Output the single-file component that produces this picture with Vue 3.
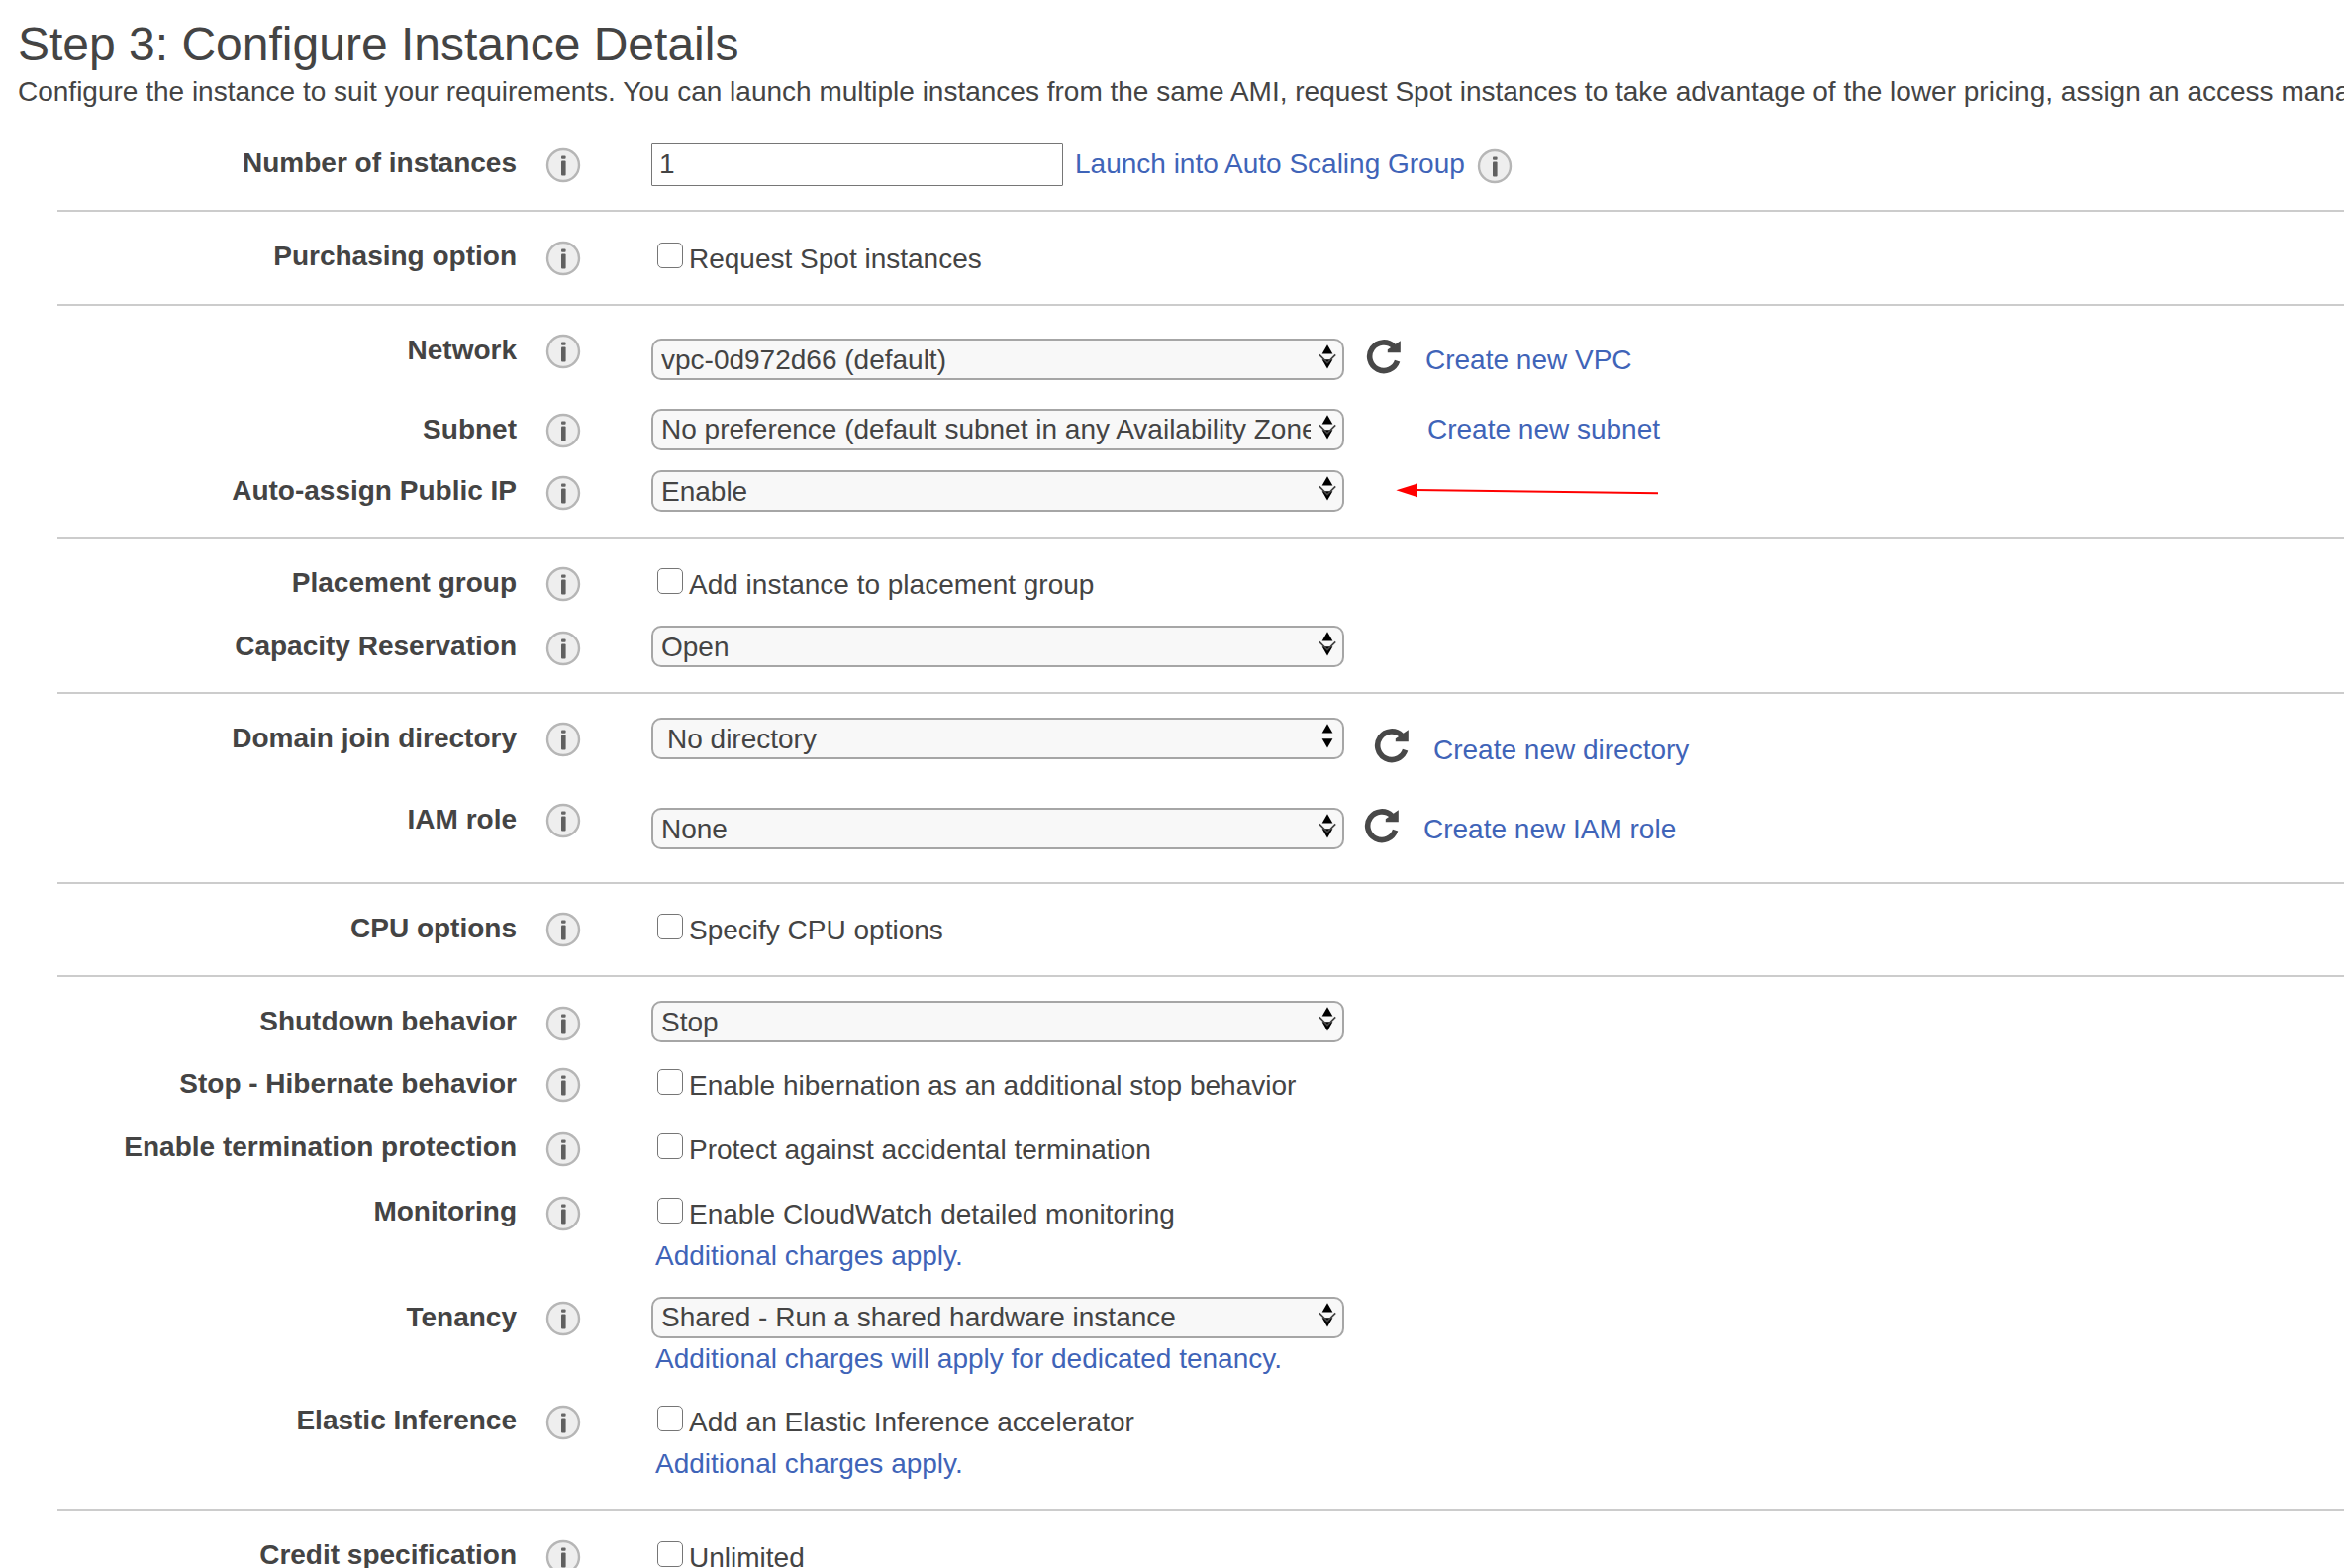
<script setup>
const sections = [
  {
    rows: [
      { label: 'Number of instances', height: 69, type: 'input', value: '1', link: 'Launch into Auto Scaling Group', kind: 'launch', top: 1 },
    ],
  },
  { pad: 23, rows: [{ label: 'Purchasing option', height: 70, type: 'check', value: 'Request Spot instances', top: 8 }] },
  {
    pad: 22,
    rows: [
      { label: 'Network', height: 80, type: 'select', value: 'vpc-0d972d66 (default)', required: true, refresh: true, link: 'Create new VPC', kind: 'vpc', top: 11, low: true },
      { label: 'Subnet', height: 63, type: 'select', value: 'No preference (default subnet in any Availability Zone)', required: true, raised: true, link: 'Create new subnet', kind: 'subnet', top: 2, low: true },
      { label: 'Auto-assign Public IP', height: 68, type: 'select', value: 'Enable', required: true, arrow: true, top: 1 },
    ],
  },
  {
    pad: 22,
    rows: [
      { label: 'Placement group', height: 65, type: 'check', value: 'Add instance to placement group', top: 8, low: true },
      { label: 'Capacity Reservation', height: 68, type: 'select', value: 'Open', required: true, top: 1 },
    ],
  },
  {
    pad: 22,
    rows: [
      { label: 'Domain join directory', height: 82, type: 'select', value: 'No directory', refresh: true, link: 'Create new directory', kind: 'directory', top: 2, low: true },
      { label: 'IAM role', height: 86, type: 'select', value: 'None', required: true, refresh: true, link: 'Create new IAM role', kind: 'iam', top: 11, low: true },
    ],
  },
  { pad: 22, rows: [{ label: 'CPU options', height: 70, type: 'check', value: 'Specify CPU options', top: 8, low: true }] },
  {
    pad: 23,
    rows: [
      { label: 'Shutdown behavior', height: 62, type: 'select', value: 'Stop', required: true, top: 1 },
      { label: 'Stop - Hibernate behavior', height: 65, type: 'check', value: 'Enable hibernation as an additional stop behavior', top: 8, low: true },
      { label: 'Enable termination protection', height: 65, type: 'check', value: 'Protect against accidental termination', top: 8 },
      { label: 'Monitoring', height: 106, type: 'check', value: 'Enable CloudWatch detailed monitoring', note: 'Additional charges apply.', top: 8 },
      { label: 'Tenancy', height: 105, type: 'select', value: 'Shared - Run a shared hardware instance', required: true, raised: true, note: 'Additional charges will apply for dedicated tenancy.', top: 2, low: true },
      { label: 'Elastic Inference', height: 111, type: 'check', value: 'Add an Elastic Inference accelerator', note: 'Additional charges apply.', top: 7 },
    ],
  },
  { pad: 23, rows: [{ label: 'Credit specification', height: 69, type: 'check', value: 'Unlimited', top: 8 }] },
]
</script>

<template>
  <main class="page">
    <svg class="defs" width="0" height="0" aria-hidden="true">
      <symbol id="info" viewBox="0 0 36 36">
        <circle cx="18" cy="18" r="16" fill="#eeeeee" stroke="#b6b6b6" stroke-width="2.4" />
        <rect x="16" y="8.6" width="4.6" height="3.2" rx="1" fill="#666" />
        <rect x="16" y="13.6" width="4.6" height="15" rx="1" fill="#606060" />
      </symbol>
      <symbol id="refresh" viewBox="0 0 36 36">
        <path d="M31.6 22.6A14.3 14.3 0 1 1 28 8" fill="none" stroke="#484848" stroke-width="5.6" />
        <path d="M34.8 2.2V14.2H21.8V11.2Z" fill="#484848" />
      </symbol>
    </svg>

    <header>
      <h1>Step 3: Configure Instance Details</h1>
      <p class="intro">Configure the instance to suit your requirements. You can launch multiple instances from the same AMI, request Spot instances to take advantage of the lower pricing, assign an access management role to the instance, and more.</p>
    </header>

    <form>
      <section v-for="(s, i) in sections" :key="i" :style="{ paddingTop: (s.pad || 0) + 'px' }">
        <div v-for="r in s.rows" :key="r.label" class="row" :style="{ height: r.height + 'px' }">
          <div class="label" :class="{ low: r.low }">{{ r.label }}</div>
          <svg class="info"><use href="#info" /></svg>
          <div class="control" :style="{ marginTop: r.top + 'px' }">
            <div class="line">
              <div v-if="r.type === 'input'" class="field">{{ r.value }}</div>
              <label v-else-if="r.type === 'check'" class="check">
                <input type="checkbox" /><span>{{ r.value }}</span>
              </label>
              <div v-else class="select" :class="{ plain: !r.required, raised: r.raised }">
                <span class="value">{{ r.value }}</span>
                <svg class="arrows" viewBox="0 0 20 28">
                  <path d="M10 1.2L15.4 10.4H4.6Z" fill="#000" />
                  <path d="M4.6 16.2H15.4L10 25.6Z" fill="#000" />
                  <path v-if="r.required" d="M1.8 11.4L10 19.6L18.2 11.4" fill="none" stroke="#444" stroke-width="1.7" />
                </svg>
              </div>
              <div v-if="r.link" class="aside" :class="r.kind">
                <svg v-if="r.refresh" class="refresh"><use href="#refresh" /></svg>
                <a>{{ r.link }}</a>
                <svg v-if="r.kind === 'launch'" class="info side"><use href="#info" /></svg>
              </div>
              <svg v-if="r.arrow" class="pointer" viewBox="0 0 266 16">
                <path d="M20 7.1L265 10.2" stroke="#f00" stroke-width="2" />
                <path d="M0.4 7.2L22 0.6V14.2Z" fill="#f00" />
              </svg>
            </div>
            <a v-if="r.note" class="note" :class="{ spaced: r.type === 'check' }">{{ r.note }}</a>
          </div>
        </div>
      </section>
    </form>
  </main>
</template>

<style>
body {
  margin: 0;
  background: #fff;
}
</style>

<style scoped>
.page {
  width: 2368px;
  height: 1584px;
  overflow: hidden;
  font: 28px/32px "Liberation Sans", Arial, sans-serif;
  color: #444;
  background: #fff;
}
.defs {
  position: absolute;
}
header {
  height: 143px;
  padding-left: 18px;
  box-sizing: border-box;
}
h1 {
  margin: 0;
  padding-top: 17px;
  font-size: 48px;
  line-height: 56px;
  font-weight: 400;
}
.intro {
  margin: 4px 0 0;
  white-space: nowrap;
}
section {
  margin-left: 58px;
}
section + section {
  border-top: 2px solid #ccc;
}
.row {
  display: flex;
  align-items: flex-start;
}
.label {
  width: 464px;
  margin-top: 6px;
  text-align: right;
  font-weight: 700;
  white-space: nowrap;
}
.label.low {
  margin-top: 7px;
}
.info {
  flex: none;
  width: 36px;
  height: 36px;
  margin: 6px 0 0 29px;
}
.control {
  margin-left: 71px;
  white-space: nowrap;
}
.line {
  display: flex;
  align-items: flex-start;
}
.field {
  width: 416px;
  height: 44px;
  box-sizing: border-box;
  padding: 5px 7px;
  border: 1px solid #767676;
  border-radius: 1px;
}
.check {
  display: flex;
  margin-left: 6px;
}
.check input {
  appearance: none;
  width: 26px;
  height: 26px;
  margin: 0 6px 0 0;
  border: 1px solid #767676;
  border-radius: 5px;
  background: #fff;
}
.check span {
  margin-top: 1px;
}
.select {
  display: flex;
  width: 700px;
  height: 42px;
  box-sizing: border-box;
  padding: 3px 5px 0 8px;
  border: 2px solid #a6a6a6;
  border-radius: 10px;
  background: #f8f8f8;
}
.value {
  flex: none;
  width: 656px;
  box-sizing: border-box;
  margin-top: 1px;
  overflow: hidden;
}
.raised .value {
  margin-top: 0;
}
.plain .value {
  padding-left: 6px;
}
.arrows {
  width: 20px;
  height: 28px;
  margin-left: 7px;
  flex: none;
}
.aside {
  display: flex;
  align-items: flex-start;
}
a {
  color: #3f64b8;
}
.refresh {
  width: 36px;
  height: 36px;
  flex: none;
}
.launch {
  margin: 6px 0 0 12px;
}
.info.side {
  margin: 0 0 0 12px;
}
.vpc a,
.iam a {
  margin-top: 6px;
}
.vpc .refresh {
  margin: 0 24px 0 22px;
}
.subnet {
  margin: 5px 0 0 84px;
}
.directory {
  margin-top: 10px;
}
.directory .refresh {
  margin: 0 24px 0 30px;
}
.directory a {
  margin-top: 7px;
}
.iam .refresh {
  margin: 0 24px 0 20px;
}
.pointer {
  width: 266px;
  height: 16px;
  margin: 13px 0 0 52px;
}
.note {
  display: block;
  margin: 5px 0 0 4px;
}
.note.spaced {
  margin-top: 10px;
}
</style>
